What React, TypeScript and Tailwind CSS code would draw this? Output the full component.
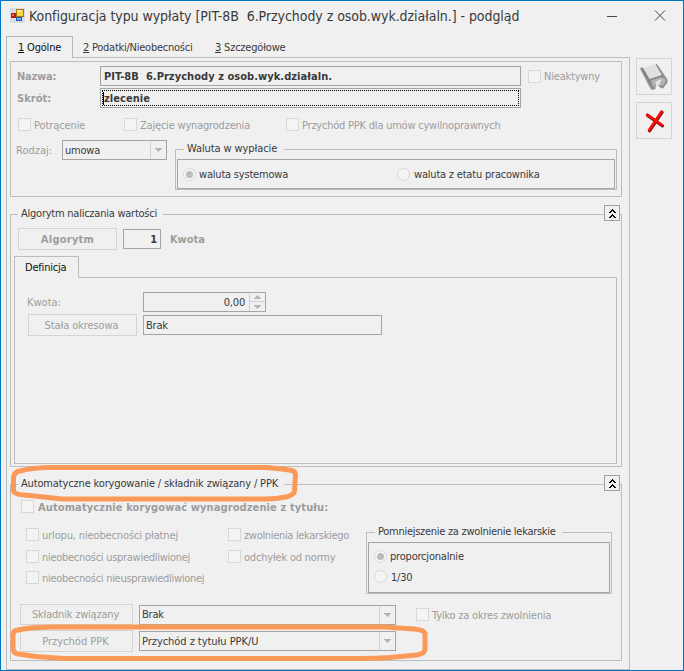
import React from 'react'
import clsx from 'clsx'

type BoxProps = {
  className?: string
  children?: React.ReactNode
}

const Check = ({ className, label, text }: { className?: string; label: string; text?: string }) => (
  <label className={clsx('flex h-[13px] items-center whitespace-nowrap text-[#9d9d9d]', className)}>
    <span className="h-[13px] w-[13px] shrink-0 border border-[#d8d8d8] bg-[#f4f4f4]" />
    <span className={clsx('ml-[3px] mt-px leading-[13px]', text)}>{label}</span>
  </label>
)

const Radio = ({ className, label, checked, text }: { className?: string; label: string; checked?: boolean; text?: string }) => (
  <label className={clsx('flex h-[13px] items-center whitespace-nowrap', className)}>
    <span className="flex h-[13px] w-[13px] shrink-0 items-center justify-center rounded-full border border-[#d8d8d8] bg-[#f4f4f4]">
      {checked && <span className="h-[7px] w-[7px] rounded-full bg-[#bcbcbc]" />}
    </span>
    <span className={clsx('leading-[13px]', text ?? 'ml-[3px]')}>{label}</span>
  </label>
)

const Button = ({ className, children }: BoxProps) => (
  <button className={clsx('flex shrink-0 items-center justify-center whitespace-nowrap border border-[#d4d4d4] text-[#9d9d9d]', className)}>
    {children}
  </button>
)

const Field = ({ className, children }: BoxProps) => (
  <div className={clsx('flex h-5 shrink-0 items-center whitespace-pre border border-[#a5a5a5]', className)}>{children}</div>
)

const Select = ({ className, children }: BoxProps) => (
  <Field className={className}>
    <span className="flex-1">{children}</span>
    <span className="flex h-full w-4 items-center justify-center border-l border-[#d0d0d0]">
      <svg width="7" height="4" viewBox="0 0 7 4" shapeRendering="crispEdges">
        <path d="M0 0h7L3.5 4z" fill="#b4b4b4" />
      </svg>
    </span>
  </Field>
)

const Collapse = () => (
  <button className="absolute -top-[17px] right-px flex h-4 w-4 items-center justify-center border border-[#a0a0a0] bg-[#f0f0f0]">
    <svg className="shrink-0" width="7" height="9" viewBox="0 0 7 9" shapeRendering="crispEdges" fill="#000">
      <path d="M3 0h1v1h1v1h1v1h1v1H5V3H4V2H3v1H2v1H0V3h1V2h1V1h1z" />
      <path d="M3 5h1v1h1v1h1v1h1v1H5V8H4V7H3v1H2v1H0V8h1V7h1V6h1z" />
    </svg>
  </button>
)

const Legend = ({ className, children }: BoxProps) => (
  <legend className={clsx('ml-[7px] h-[15px] whitespace-nowrap pl-[3px] leading-[13px]', className)}>{children}</legend>
)

const AppIcon = () => (
  <svg width="15" height="15" viewBox="0 0 15 15">
    <path fill="#d9dde3" d="M0 0h15v15H0z" />
    <path fill="#b01c14" d="M1 5h5v5H1z" />
    <path fill="#f0705c" d="M2 6h2v2H2z" />
    <path fill="#a87800" d="M6 1h8v8H6z" />
    <path fill="#ffd24a" d="M7 2h6v6H7z" />
    <path fill="#fff0a8" d="M7 2h4v2H7z" />
    <path fill="#2856b8" d="M6 9h6v4H6z" />
    <path fill="#78a8f0" d="M7 10h4v2H7z" />
  </svg>
)

const SaveIcon = () => (
  <svg className="shrink-0" width="28" height="27" viewBox="0 0 28 27">
    <path fill="#e0e0e0" d="M3 5L15.500 1l6.500 12-12 4z" />
    <path fill="#929292" d="M0 5.500L2.500 4 10 16.500l12-4L15.500 1.500 17 1l10.500 15.500v3L23 25.500l-2.500-.5-2.500-3-2.500 1v3l-4 1L9 23z" />
    <path fill="#b4b4b4" d="M11 17.500l11.500-4 3.500 3.500-3 6-2.500-3L22 16l-6 3-1.500 4-1 1z" />
    <path fill="#e4e4e4" d="M15 20l2.500-2.500 5-1.500-2.500 4 1.500 2.500-2.500-1L16.500 23z" />
    <path fill="none" stroke="#777" d="M10 16.500L22 12.500l1 2.500M2 5.500l9.500 16" />
  </svg>
)

const CloseIcon = () => (
  <svg className="shrink-0" width="20" height="24" viewBox="0 0 20 24" fill="none" strokeLinecap="round">
    <path stroke="#7c1010" strokeWidth="3" d="M18.100 3.300L5.600 22M3.500 6.500L18.500 17" />
    <path stroke="#f80d0d" strokeWidth="2.6" d="M17.500 2.500L5 21.300M3.200 5.600L18 16" />
  </svg>
)

const App = () => {
  return (
    <div className="relative flex h-[671px] w-[684px] flex-col overflow-hidden border border-[#0173c7] bg-[#f0f0f0] font-['DejaVu_Sans_Condensed','DejaVu_Sans',sans-serif] text-[11px] leading-[13px] tracking-[-0.2px] text-[#3a3a3a]">
      <header className="flex h-[35px] shrink-0 items-start">
        <div className="ml-[9px] mt-[7px]"><AppIcon /></div>
        <h1 className="ml-1 mt-[5px] flex-1 whitespace-pre text-[14px] leading-5 tracking-[-0.06px]">Konfiguracja typu wypłaty [PIT-8B  6.Przychody z osob.wyk.działaln.] - podgląd</h1>
        <svg className="mr-4 mt-[9px]" width="60" height="11" viewBox="0 0 60 11" fill="none" stroke="#444">
          <path d="M0 6.5h10" shapeRendering="crispEdges" />
          <path d="M48 .5l10 10M58 .5l-10 10" />
        </svg>
      </header>

      <div className="flex">
        <main className="ml-[5px] w-[624px] shrink-0">
          <nav className="flex h-[21px] items-center">
            <span className="relative z-10 flex h-[22px] w-[67px] shrink-0 items-center self-start border border-b-0 border-[#b8b8b8] bg-[#f0f0f0] pl-[11px] text-[#111]"><u>1</u>&nbsp;Ogólne</span>
            <span className="ml-[10px] mt-[2px] w-[132px] whitespace-nowrap tracking-[-0.25px]"><u>2</u> Podatki/Nieobecności</span>
            <span className="mt-[2px] whitespace-nowrap"><u>3</u> Szczegółowe</span>
          </nav>

          <div className="h-[613px] border border-[#bdbdbd] px-[3px] pt-[3px]">
            <section className="h-[136px] w-[612px] border border-[#bdbdbd]">
              <div className="mt-1 flex h-5 items-center">
                <span className="ml-[6px] w-[83px] font-bold text-[#9d9d9d]">Nazwa:</span>
                <Field className="w-[421px] pl-[3px] font-bold tracking-[0.05px]">PIT-8B  6.Przychody z osob.wyk.działaln.</Field>
                <Check className="ml-[7px]" label="Nieaktywny" />
              </div>
              <div className="mt-[2px] flex h-5 items-center">
                <span className="ml-[6px] w-[83px] font-bold tracking-[0.05px] text-[#9d9d9d]">Skrót:</span>
                <Field className="w-[421px] p-px font-bold tracking-[0.05px]">
                  <span className="flex h-4 w-full items-center border border-dotted border-black">
                    <span className="h-[13px] w-px bg-black" />zlecenie
                  </span>
                </Field>
              </div>
              <div className="mt-[10px] flex">
                <Check className="ml-[7px] w-[106px]" label="Potrącenie" text="tracking-[-0.1px]" />
                <Check className="w-[162px]" label="Zajęcie wynagrodzenia" />
                <Check label="Przychód PPK dla umów cywilnoprawnych" text="tracking-[-0.22px]" />
              </div>
              <div className="mt-[9px] flex">
                <span className="ml-[5px] mt-1 w-[46px] text-[#9d9d9d] tracking-[0px]">Rodzaj:</span>
                <Select className="w-[105px] pl-[2px]">umowa</Select>
                <fieldset className="ml-2 mt-[2px] h-[48px] w-[442px] border border-[#bdbdbd] px-px">
                  <Legend className="w-[100px] tracking-[-0.1px]">Waluta w wypłacie</Legend>
                  <div className="mt-[2px] flex h-[30px] items-center border border-[#a5a5a5]">
                    <Radio className="ml-[5px] w-[214px]" label="waluta systemowa" checked />
                    <Radio label="waluta z etatu pracownika" text="ml-1" />
                  </div>
                </fieldset>
              </div>
            </section>

            <fieldset className="relative mt-[10px] h-[260px] w-[612px] border border-[#bdbdbd]">
              <Legend className="w-[145px] tracking-[-0.24px]">Algorytm naliczania wartości</Legend>
              <Collapse />
              <div className="mt-[6px] flex h-[22px] items-center">
                <Button className="ml-[7px] h-[22px] w-[99px] font-bold tracking-[0.25px]">Algorytm</Button>
                <Field className="ml-[6px] w-[38px] justify-end pr-[3px] font-bold">1</Field>
                <span className="ml-[9px] font-bold tracking-[-0.05px] text-[#9d9d9d]">Kwota</span>
              </div>
              <div className="ml-[3px] mt-[6px] w-[603px]">
                <div className="relative z-10 -mb-px flex h-[22px] w-[65px] items-center border border-b-0 border-[#bdbdbd] bg-[#f0f0f0] pl-[10px] text-[#111]">Definicja</div>
                <div className="h-[187px] border border-[#bdbdbd]">
                  <div className="mt-[14px] flex h-5 items-center">
                    <span className="ml-3 w-[116px] text-[#9d9d9d] tracking-[0px]">Kwota:</span>
                    <Field className="w-[123px]">
                      <span className="flex-1 pr-1 text-right">0,00</span>
                      <span className="flex h-full w-4 flex-col border-l border-[#d0d0d0]">
                        <span className="flex h-[9px] items-center justify-center border-b border-[#d0d0d0]">
                          <svg width="7" height="4" shapeRendering="crispEdges"><path d="M0 4h7L3.5 0z" fill="#b4b4b4" /></svg>
                        </span>
                        <span className="flex h-[9px] items-center justify-center">
                          <svg width="7" height="4" shapeRendering="crispEdges"><path d="M0 0h7L3.5 4z" fill="#b4b4b4" /></svg>
                        </span>
                      </span>
                    </Field>
                  </div>
                  <div className="mt-[2px] flex h-[22px] items-center">
                    <Button className="ml-[13px] h-[22px] w-[109px] pr-[2px] tracking-[-0.1px]">Stała okresowa</Button>
                    <Field className="ml-[6px] w-[239px] pl-[2px]">Brak</Field>
                  </div>
                </div>
              </div>
            </fieldset>

            <fieldset className="relative mt-[10px] h-[184px] w-[612px] border border-[#bdbdbd]">
              <Legend className="w-[266px] tracking-[-0.15px]">Automatyczne korygowanie / składnik związany / PPK</Legend>
              <Collapse />
              <Check className="ml-[10px] mt-2 font-bold" label="Automatycznie korygować wynagrodzenie z tytułu:" text="pl-px tracking-[0.11px]" />
              <div className="mt-[11px] flex h-[70px]">
                <div className="ml-[15px] mt-[4px] w-[202px]">
                  <Check label="urlopu, nieobecności płatnej" text="tracking-[-0.14px]" />
                  <Check className="mt-[9px]" label="nieobecności usprawiedliwionej" text="tracking-[-0.28px]" />
                  <Check className="mt-2" label="nieobecności nieusprawiedliwionej" text="tracking-[-0.28px]" />
                </div>
                <div className="mt-[4px] w-[138px]">
                  <Check label="zwolnienia lekarskiego" text="tracking-[-0.32px]" />
                  <Check className="mt-[9px]" label="odchyłek od normy" />
                </div>
                <fieldset className="mt-px h-[69px] w-[246px] shrink-0 border border-[#bdbdbd] px-px">
                  <Legend className="w-[187px] tracking-[-0.28px]">Pomniejszenie za zwolnienie lekarskie</Legend>
                  <div className="mt-[2px] h-[51px] border border-[#a5a5a5] pl-[5px] pt-[7px]">
                    <Radio label="proporcjonalnie" checked />
                    <Radio className="mt-[7px]" label="1/30" text="ml-1 mt-px" />
                  </div>
                </fieldset>
              </div>
              <div className="mt-[10px] flex h-[21px] items-center">
                <Button className="ml-[9px] h-[21px] w-[113px] pr-[2px]">Składnik związany</Button>
                <Select className="ml-[6px] w-[257px] pl-[2px]">Brak</Select>
                <Check className="ml-5" label="Tylko za okres zwolnienia" />
              </div>
              <div className="mt-[5px] flex h-[22px] items-center">
                <Button className="ml-[9px] h-[22px] w-[113px] pr-[2px] tracking-[0px]">Przychód PPK</Button>
                <Select className="ml-[6px] w-[257px] pl-[2px] tracking-[-0.05px]">Przychód z tytułu PPK/U</Select>
              </div>
            </fieldset>
          </div>
        </main>

        <aside className="ml-[6px] mt-[22px] flex flex-col gap-[7px]">
          <Button className="h-[37px] w-9"><SaveIcon /></Button>
          <Button className="h-[37px] w-9 border-[#a5a5a5]"><CloseIcon /></Button>
        </aside>
      </div>

      {/* highlighter marks */}
      <svg className="pointer-events-none absolute -left-px -top-px" width="684" height="671" fill="none" stroke="#fb9a58" strokeWidth="5" strokeLinejoin="round">
        <path d="M22 470.500Q32 468 48 467.500H266Q284 469 292 470.500Q295 471 295.500 475L294.500 491Q294 495 286 497Q276 499 266 499H62L30 495.500Q14 495 13.500 491V478Q14 471 22 470.500Z" />
        <path d="M18 630Q30 627 55 627H384L414 629Q425 630 425 634V649Q425 654 416 655L390 657.500Q375 658.500 360 658.500H64L36 656.500L18 654Q13 653 13 648V635Q13 630 18 630Z" />
      </svg>
    </div>
  )
}

export default App
